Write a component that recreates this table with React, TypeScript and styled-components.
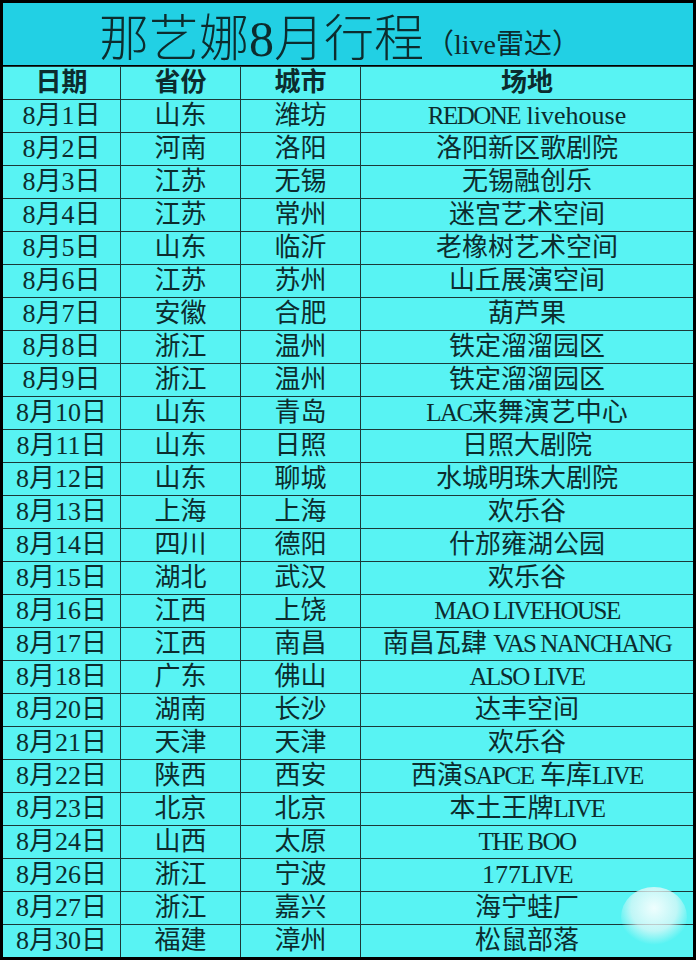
import * as React from 'react'
import styled, { createGlobalStyle } from 'styled-components'

const GlobalStyle = createGlobalStyle`
    html, body {
        margin: 0;
        padding: 0;
        background: #ffffff;
    }
    body {
        width: 696px;
        height: 962px;
        overflow: hidden;
    }
`

const LINE = '#1b3838'
const INK = '#0c2c2e'

const Frame = styled.div`
    position: relative;
    box-sizing: border-box;
    width: 696px;
    border: 3px solid #000;
    background: ${LINE};
    display: grid;
    grid-template-columns: 117px 119px 119px 1fr;
    grid-template-rows: 63px;
    grid-auto-rows: 32px;
    gap: 1px;
    font-family: "Liberation Serif", "Noto Sans CJK SC", serif;
    color: ${INK};
`

const TitleBar = styled.div`
    grid-column: 1 / -1;
    height: 62px;
    border-bottom: 1px solid #000;
    background: #22d0e4;
    display: flex;
    align-items: flex-end;
    justify-content: flex-start;
    padding-left: 96px;
`

const Title = styled.span`
    font-size: 50px;
    line-height: 52px;
    font-weight: 300;
`

const SubTitle = styled.span`
    font-size: 28px;
    line-height: 28px;
    margin-left: 2px;
    margin-bottom: 6px;
`

const Cell = styled.div<{ $head?: boolean }>`
    background: #58f3f3;
    text-align: center;
    font-size: 26px;
    line-height: 32px;
    font-weight: ${p => (p.$head ? 700 : 400)};
    white-space: nowrap;
    overflow: hidden;
`

const Caps = styled.span`
    font-size: 25px;
    letter-spacing: -1.5px;
`

const Watermark = styled.div`
    position: absolute;
    right: 6px;
    bottom: 10px;
    width: 66px;
    height: 60px;
    border-radius: 50%;
    background: radial-gradient(circle at 50% 35%, rgba(255,255,255,0.9) 0%, rgba(235,248,248,0.7) 45%, rgba(255,255,255,0) 72%);
    pointer-events: none;
`

const heads = ['日期', '省份', '城市', '场地']

const rows: string[][] = [
    ['8月1日', '山东', '潍坊', 'REDONE livehouse'],
    ['8月2日', '河南', '洛阳', '洛阳新区歌剧院'],
    ['8月3日', '江苏', '无锡', '无锡融创乐'],
    ['8月4日', '江苏', '常州', '迷宫艺术空间'],
    ['8月5日', '山东', '临沂', '老橡树艺术空间'],
    ['8月6日', '江苏', '苏州', '山丘展演空间'],
    ['8月7日', '安徽', '合肥', '葫芦果'],
    ['8月8日', '浙江', '温州', '铁定溜溜园区'],
    ['8月9日', '浙江', '温州', '铁定溜溜园区'],
    ['8月10日', '山东', '青岛', 'LAC来舞演艺中心'],
    ['8月11日', '山东', '日照', '日照大剧院'],
    ['8月12日', '山东', '聊城', '水城明珠大剧院'],
    ['8月13日', '上海', '上海', '欢乐谷'],
    ['8月14日', '四川', '德阳', '什邡雍湖公园'],
    ['8月15日', '湖北', '武汉', '欢乐谷'],
    ['8月16日', '江西', '上饶', 'MAO LIVEHOUSE'],
    ['8月17日', '江西', '南昌', '南昌瓦肆 VAS NANCHANG'],
    ['8月18日', '广东', '佛山', 'ALSO LIVE'],
    ['8月20日', '湖南', '长沙', '达丰空间'],
    ['8月21日', '天津', '天津', '欢乐谷'],
    ['8月22日', '陕西', '西安', '西演SAPCE 车库LIVE'],
    ['8月23日', '北京', '北京', '本土王牌LIVE'],
    ['8月24日', '山西', '太原', 'THE BOO'],
    ['8月26日', '浙江', '宁波', '177LIVE'],
    ['8月27日', '浙江', '嘉兴', '海宁蛙厂'],
    ['8月30日', '福建', '漳州', '松鼠部落'],
]

// uppercase runs are set a bit tighter, like the half-width latin of the original
const renderText = (text: string) =>
    text.split(/([A-Z]+(?: [A-Z]+)*)/).map((part, i) =>
        /^[A-Z]/.test(part) ? <Caps key={i}>{part}</Caps> : <React.Fragment key={i}>{part}</React.Fragment>
    )

const App: React.FC = (): JSX.Element => {
    return (
        <>
            <GlobalStyle />
            <Frame>
                <TitleBar>
                    <Title>那艺娜8月行程</Title>
                    <SubTitle>（live雷达）</SubTitle>
                </TitleBar>
                {heads.map(h => (
                    <Cell $head key={h}>{h}</Cell>
                ))}
                {rows.map(r =>
                    r.map((c, j) => <Cell key={r[0] + j}>{renderText(c)}</Cell>)
                )}
                <Watermark />
            </Frame>
        </>
    )
}

export default App
